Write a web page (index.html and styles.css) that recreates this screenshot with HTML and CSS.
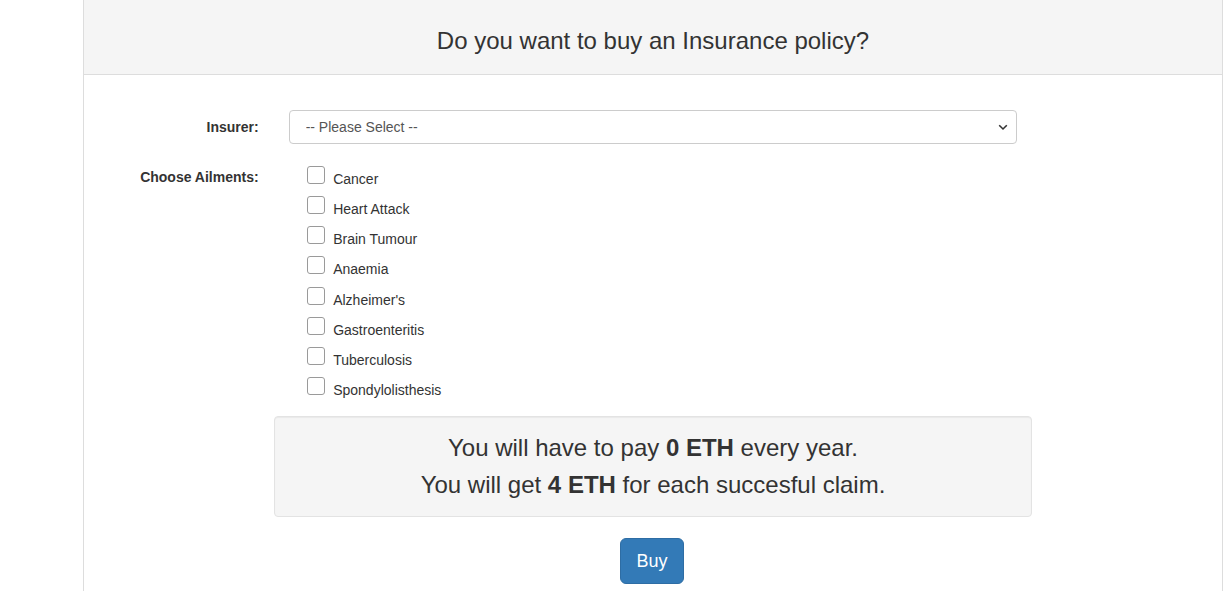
FILE: index.html
```html
<!DOCTYPE html>
<html>
<head>
<meta charset="utf-8">
<title>Insurance</title>
<link rel="stylesheet" href="styles.css">
</head>
<body>
<div class="panel">
  <div class="panel-heading">Do you want to buy an Insurance policy?</div>
  <div class="panel-body">
    <form class="form">
      <div class="form-row">
        <label class="form-label">Insurer:</label>
        <div class="form-control-col">
          <div class="select-wrap">
            <select class="select">
              <option>-- Please Select --</option>
            </select>
            <svg class="select-arrow" width="10" height="7" viewBox="0 0 10 7"><path d="M1.2 1.3 L5 5 L8.8 1.3" fill="none" stroke="#333" stroke-width="1.6"/></svg>
          </div>
        </div>
      </div>
      <div class="form-row">
        <label class="form-label label-ailments">Choose Ailments:</label>
        <div class="form-control-col checks">
          <label class="check"><input type="checkbox"><span>Cancer</span></label>
          <label class="check"><input type="checkbox"><span>Heart Attack</span></label>
          <label class="check"><input type="checkbox"><span>Brain Tumour</span></label>
          <label class="check"><input type="checkbox"><span>Anaemia</span></label>
          <label class="check"><input type="checkbox"><span>Alzheimer's</span></label>
          <label class="check"><input type="checkbox"><span>Gastroenteritis</span></label>
          <label class="check"><input type="checkbox"><span>Tuberculosis</span></label>
          <label class="check"><input type="checkbox"><span>Spondylolisthesis</span></label>
        </div>
      </div>
      <div class="form-row">
        <div class="form-spacer"></div>
        <div class="well-col">
          <div class="well">
            <p>You will have to pay <b>0 ETH</b> every year.</p>
            <p>You will get <b>4 ETH</b> for each succesful claim.</p>
          </div>
        </div>
      </div>
      <div class="actions">
        <button type="button" class="btn">Buy</button>
      </div>
    </form>
  </div>
</div>
</body>
</html>
```
FILE: styles.css
```css
html, body {
  margin: 0;
  padding: 0;
  background: #fff;
  font-family: "Liberation Sans", Arial, sans-serif;
  font-size: 14px;
  line-height: 20px;
  color: #333;
  overflow: hidden;
}

.panel {
  margin-left: 83px;
  width: 1140px;
  box-sizing: border-box;
  border: 1px solid #ddd;
  border-top: none;
  background: #fff;
  height: 620px;
}

.panel-heading {
  background: #f5f5f5;
  border-bottom: 1px solid #ddd;
  height: 75px;
  box-sizing: border-box;
  font-size: 24px;
  line-height: 28px;
  text-align: center;
  padding-top: 27px;
}

.panel-body {
  padding: 35px 0 0 0;
}

.form-row {
  display: flex;
}

.form-label {
  flex: 0 0 189.67px;
  box-sizing: border-box;
  padding: 7px 15px 0 0;
  text-align: right;
  font-weight: bold;
}

.label-ailments {
  padding-top: 8px;
}

.form-control-col {
  flex: 0 0 758.67px;
  box-sizing: border-box;
  padding: 0 15px;
}

.select-wrap {
  position: relative;
  margin-bottom: 15px;
}

.select {
  display: block;
  width: 100%;
  height: 34px;
  box-sizing: border-box;
  -webkit-appearance: none;
  appearance: none;
  border: 1px solid #ccc;
  border-radius: 4px;
  background: #fff;
  padding: 0 12px 0 16px;
  font-family: "Liberation Sans", Arial, sans-serif;
  font-size: 14px;
  color: #555;
}

.select-arrow {
  position: absolute;
  right: 9px;
  top: 14px;
  pointer-events: none;
}

.checks {
  padding-top: 7px;
  padding-left: 33.5px;
}

.check {
  display: flex;
  align-items: flex-start;
  height: 30.15px;
}

.check input {
  -webkit-appearance: none;
  appearance: none;
  width: 18px;
  height: 18px;
  box-sizing: border-box;
  margin: 0 8px 0 0;
  border: 1px solid #9a9a9a;
  border-radius: 3px;
  background: #fff;
}

.check span {
  padding-top: 3px;
}

.form-spacer {
  flex: 0 0 189.67px;
}

.well-col {
  flex: 0 0 758.67px;
  padding-top: 9px;
}

.well {
  background: #f5f5f5;
  border: 1px solid #e3e3e3;
  border-radius: 4px;
  box-shadow: inset 0 1px 1px rgba(0,0,0,.05);
  padding: 12px 0 13px;
  text-align: center;
  font-size: 24px;
  line-height: 37px;
}

.well p {
  margin: 0;
}

.actions {
  display: flex;
  justify-content: center;
  padding-top: 21px;
  padding-right: 2px;
}

.btn {
  background: #337ab7;
  border: 1px solid #2e6da4;
  color: #fff;
  border-radius: 6px;
  font-family: "Liberation Sans", Arial, sans-serif;
  font-size: 18px;
  line-height: 24px;
  padding: 10px 15px;
  height: 46px;
  width: 64px;
}
```
